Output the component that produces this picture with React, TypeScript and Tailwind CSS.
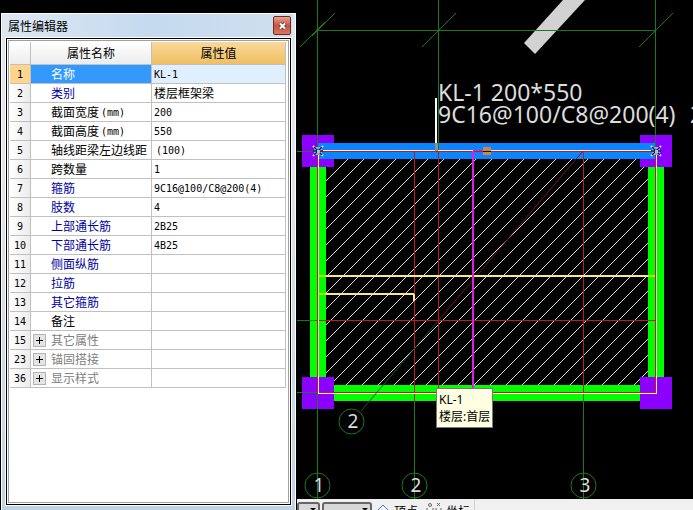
type Row = {
  no: number;
  name: string;
  unit?: string;
  value?: string;
  tone?: "key" | "group";
};

const rows: Row[] = [
  { no: 1, name: "名称", value: "KL-1" },
  { no: 2, name: "类别", value: "楼层框架梁", tone: "key" },
  { no: 3, name: "截面宽度", unit: "(mm)", value: "200" },
  { no: 4, name: "截面高度", unit: "(mm)", value: "550" },
  { no: 5, name: "轴线距梁左边线距", value: "(100)" },
  { no: 6, name: "跨数量", value: "1" },
  { no: 7, name: "箍筋", value: "9C16@100/C8@200(4)", tone: "key" },
  { no: 8, name: "肢数", value: "4", tone: "key" },
  { no: 9, name: "上部通长筋", value: "2B25", tone: "key" },
  { no: 10, name: "下部通长筋", value: "4B25", tone: "key" },
  { no: 11, name: "侧面纵筋", tone: "key" },
  { no: 12, name: "拉筋", tone: "key" },
  { no: 13, name: "其它箍筋", tone: "key" },
  { no: 14, name: "备注" },
  { no: 15, name: "其它属性", tone: "group" },
  { no: 23, name: "锚固搭接", tone: "group" },
  { no: 36, name: "显示样式", tone: "group" },
];

const MONO = "font-['DejaVu_Sans_Mono','Noto_Sans_CJK_SC',monospace] text-[10px]";
const CJK = "font-['Noto_Sans_CJK_SC',sans-serif] text-[12px]";

const nameColor = (row: Row) => {
  if (row.no === 1) return "bg-[#3399ff] text-white";
  if (row.tone === "key") return "text-[#0000a0]";
  if (row.tone === "group") return "text-[#808080]";
  return "text-black";
};

const PropertyRow = ({ row }: { row: Row }) => (
  <tr className="h-[19px]">
    <th
      scope="row"
      className={`border-r border-b border-[#c0c0c0] p-0 text-center font-normal ${MONO} ${
        row.no === 1 ? "bg-[#ffd58d]" : "bg-linear-to-r from-white to-[#ececec]"
      }`}
    >
      {row.no}
    </th>
    <td className={`border-r border-b border-[#c0c0c0] p-0 ${nameColor(row)}`}>
      <div className="flex h-[18px] items-center">
        <span className="flex w-5 shrink-0 pl-0.5">
          {row.tone === "group" && (
            <button
              type="button"
              aria-label={`展开${row.name}`}
              className="flex size-[13px] items-center justify-center border border-[#b4b4b4] bg-[#e4e4e4] text-black"
            >
              <svg viewBox="0 0 7 7" className="size-[7px]" shapeRendering="crispEdges">
                <path d="M0 3h7v1H0zM3 0h1v7H3z" />
              </svg>
            </button>
          )}
        </span>
        <span className={`whitespace-nowrap ${CJK}`}>{row.name}</span>
        {row.unit && <span className={`pl-0.5 ${MONO}`}>{row.unit}</span>}
      </div>
    </td>
    <td className={`border-r border-b border-[#c0c0c0] p-0 ${row.no === 1 ? "bg-[#e0effe]" : ""}`}>
      <div
        className={`flex h-[18px] items-center whitespace-nowrap text-black ${row.no === 5 ? "pl-1" : "pl-0.5"} ${
          row.no === 2 ? CJK : MONO
        }`}
      >
        {row.value}
      </div>
    </td>
  </tr>
);

const PropertyEditor = () => (
  <aside className="mt-[13px] ml-px flex w-[295px] shrink-0 flex-col border-x border-t border-white bg-linear-to-b from-[#dbe7f3] via-[#dfe4ea] via-30% to-[#bfd3e6] px-[3px] pb-1">
    <header className="flex h-[23px] items-center justify-between bg-linear-to-r from-[#dde7f2] via-[#c5daef] to-[#cfdfee] pl-[3px]">
      <h1 className={CJK}>属性编辑器</h1>
      <button
        type="button"
        aria-label="关闭"
        className="mr-px flex h-[19px] w-[18px] items-center justify-center rounded-xs border border-[#6e2a22] bg-linear-to-b from-[#e5a497] via-[#c8503c] to-[#d67a60]"
      >
        <svg viewBox="0 0 9 8" className="h-2 w-[9px]" fill="none">
          <path d="M2 1.5L7 6.5M7 1.5L2 6.5" stroke="#5a3a44" strokeWidth="3.6" />
          <path d="M2 1.5L7 6.5M7 1.5L2 6.5" stroke="#ffffff" strokeWidth="2" />
        </svg>
      </button>
    </header>
    <div className="flex flex-1 border border-white">
      <div className="flex flex-1 border border-black bg-white p-px">
        <div className="flex-1 border border-[#a0a0a0] p-px">
          <table className="w-[276px] table-fixed border-separate border-spacing-0">
            <colgroup>
              <col className="w-[21px]" />
              <col className="w-[121px]" />
              <col className="w-[134px]" />
            </colgroup>
            <thead>
              <tr className={`h-[23px] ${CJK}`}>
                <td className="border-r border-b border-[#c0c0c0] bg-linear-to-b from-white to-[#ececec] p-0" />
                <th scope="col" className="border-r border-b border-[#c0c0c0] bg-linear-to-b from-white to-[#ececec] p-0 font-normal">
                  属性名称
                </th>
                <th scope="col" className="border-r border-b border-[#c0c0c0] bg-linear-to-b from-[#f8d99a] to-[#f0bf60] p-0 font-normal">
                  属性值
                </th>
              </tr>
            </thead>
            <tbody>
              {rows.map((row) => (
                <PropertyRow key={row.no} row={row} />
              ))}
            </tbody>
          </table>
        </div>
      </div>
    </div>
  </aside>
);

const bubbles = [
  { label: "2", x: 351, y: 421 },
  { label: "1", x: 317, y: 485 },
  { label: "2", x: 414, y: 485 },
  { label: "3", x: 583, y: 485 },
];

const columns = [
  { x: 302, y: 135 },
  { x: 640, y: 135 },
  { x: 302, y: 377 },
  { x: 640, y: 377 },
];

// slab hatch: 45° lines, 16 units apart
const hatch = Array.from({ length: 36 }, (_, i) => 491 + i * 16);

const NodeMark = ({ x, y }: { x: number; y: number }) => (
  <g transform={`translate(${x} ${y})`}>
    <path d="M-4 -4h8v8h-8z" fill="#8fa9b5" />
    <path d="M-5 -5L5 5M5 -5L-5 5" stroke="#f4f0c0" strokeWidth="2" strokeDasharray="2 1" />
    <path d="M-4 -4L4 4M4 -4L-4 4M-5 0H5" stroke="#0b1c7a" strokeWidth="1.5" />
    <path d="M-1 -1h3v3h-3z" fill="#a9c4d0" />
  </g>
);

const Drawing = () => (
  <svg
    viewBox="297 0 396 499"
    preserveAspectRatio="xMinYMin slice"
    className="absolute inset-0 size-full"
    fill="none"
    role="img"
    aria-label="首层梁平面图"
  >
    <defs>
      <clipPath id="slab">
        <path d="M326 159h322v226H326z" />
      </clipPath>
    </defs>

    <path d="M563 0h22L535 54L524 43z" fill="#d2d2d2" />

    <g clipPath="url(#slab)" stroke="#dedede" shapeRendering="crispEdges">
      {hatch.map((sum) => (
        <path key={sum} d={`M${sum - 159} 159L${sum - 385} 385`} />
      ))}
    </g>

    <g shapeRendering="crispEdges">
      <path d="M310 167h16v210h-16zM648 167h16v210h-16zM334 385h306v16H334z" fill="#00ff00" />
      <g fill="#8c00ff">
        {columns.map((c) => (
          <path key={`${c.x}-${c.y}`} d={`M${c.x} ${c.y}h32v32h-32z`} />
        ))}
      </g>
      <path d="M318 143h338v16H318z" fill="#0a84ff" />

      {/* axis grid */}
      <g stroke="#1c7a1c">
        <path d="M317.5 0V151M438.5 0V151M655.5 0V151M318 30.5H655M297 151.5H318M297 320.5H318M297 392.5H318" />
        <path d="M317.5 393V499M414.5 401V499M583.5 393V499" />
        <path d="M300 47L335 13M422 47L456 13M639 47L673 13" />
      </g>
      <g stroke="#c01a1a">
        <path d="M414.5 152V401M438.5 152V401M583.5 152V393M318 320.5H655" />
        <path d="M317.5 152V392.5H655.5V151.5H318" />
      </g>
      <path d="M318.5 151V393.5H656.5V150.5H318" stroke="#fff0d0" />
    </g>
    <path d="M361 411L438 321" stroke="#17541f" />
    <path d="M438 321L583 151" stroke="#7a1414" />

    <g shapeRendering="crispEdges">
      <path d="M318 276H655M318 294H414M413.5 294V301" stroke="#f6ea80" strokeWidth="2" />
      <path d="M318 276h8M318 294h8M648 276h7" stroke="#b4f000" strokeWidth="2" />
      <path d="M473 151V388" stroke="#e020e0" strokeWidth="2" />
      <path d="M473 150.5h10" stroke="#e020e0" />
      <path d="M436 98v45" stroke="#fff" strokeWidth="2" />
      <path d="M435 143h3v8h-3z" fill="#8a8f96" />
      <path d="M483 147h8v8h-8z" fill="#cc8844" />
      <path d="M483 151.5h8" stroke="#111" />
    </g>
    <NodeMark x={318} y={151} />
    <NodeMark x={656} y={151} />

    <g fill="#dcdcdc" className="font-['Noto_Sans',sans-serif]">
      <text y="101" className="text-[23px]">
        <tspan x="438">KL-1 200*550</tspan>
        <tspan x="438" y="123">9C16@100/C8@200(4)</tspan>
        <tspan x="690" y="123">2B25</tspan>
      </text>
      {bubbles.map((b) => (
        <text key={`${b.x}-${b.y}`} x={b.x + 2} y={b.y + 7} textAnchor="middle" className="text-[19px]">
          {b.label}
        </text>
      ))}
    </g>
    <g stroke="#1c7a1c">
      {bubbles.map((b) => (
        <circle key={`${b.x}-${b.y}`} cx={b.x + 0.5} cy={b.y + 0.5} r="12.5" />
      ))}
    </g>
  </svg>
);

const Combo = ({ label, className }: { label: string; className: string }) => (
  <span className={`relative mt-[3px] h-5 shrink-0 ${className}`}>
    <select
      aria-label={label}
      className="block h-5 w-full appearance-none rounded-[3px] border-2 border-[#666666] bg-[#d8d8d8]"
    />
    <svg viewBox="0 0 6 3" className="pointer-events-none absolute top-[6px] right-1 w-1.5" fill="#111111">
      <path d="M0 0h6L3 3z" />
    </svg>
  </span>
);

const SnapBar = () => (
  <footer className="flex h-[11px] shrink-0 items-start overflow-hidden bg-[#f0f0f0]">
    <div className="flex items-start border-r border-[#d0d0d0] pr-1">
      <Combo label="楼层" className="w-[23px]" />
      <Combo label="偏移" className="ml-0.5 w-[50px]" />
      <button type="button" className={`ml-1 flex items-start whitespace-nowrap ${CJK}`}>
        <svg viewBox="0 0 14 14" className="mt-[5px] size-3.5" fill="#eef4ff" stroke="#5577bb">
          <path d="M7 1L13 7L7 13L1 7z" />
        </svg>
        <span className="mt-1 ml-1 leading-4">顶点</span>
      </button>
      <button type="button" className={`ml-2 flex items-start whitespace-nowrap ${CJK}`}>
        <svg viewBox="0 0 16 14" className="mt-1 h-3.5 w-4" fill="none" stroke="#666666">
          <circle cx="4" cy="2" r="1.5" />
          <path d="M11 0l3 3M14 0l-3 3M0 6h2M6 6h2M9 6h2M14 6h2" />
        </svg>
        <span className="mt-1 ml-1 leading-4">坐标</span>
      </button>
    </div>
  </footer>
);

export default function App() {
  return (
    <div className="flex h-screen overflow-hidden bg-black text-black">
      <PropertyEditor />
      <main className="ml-px flex min-w-0 flex-1 flex-col">
        <div className="relative flex-1 overflow-hidden">
          <Drawing />
          <div
            role="tooltip"
            className="absolute top-[388px] left-[139px] border border-[#777777] bg-[#ffffe1] px-0.5 py-[2px] font-['Noto_Sans','Noto_Sans_CJK_SC',sans-serif] text-[12px] leading-[17px] whitespace-nowrap"
          >
            <p>KL-1</p>
            <p>楼层:首层</p>
          </div>
        </div>
        <SnapBar />
      </main>
    </div>
  );
}
